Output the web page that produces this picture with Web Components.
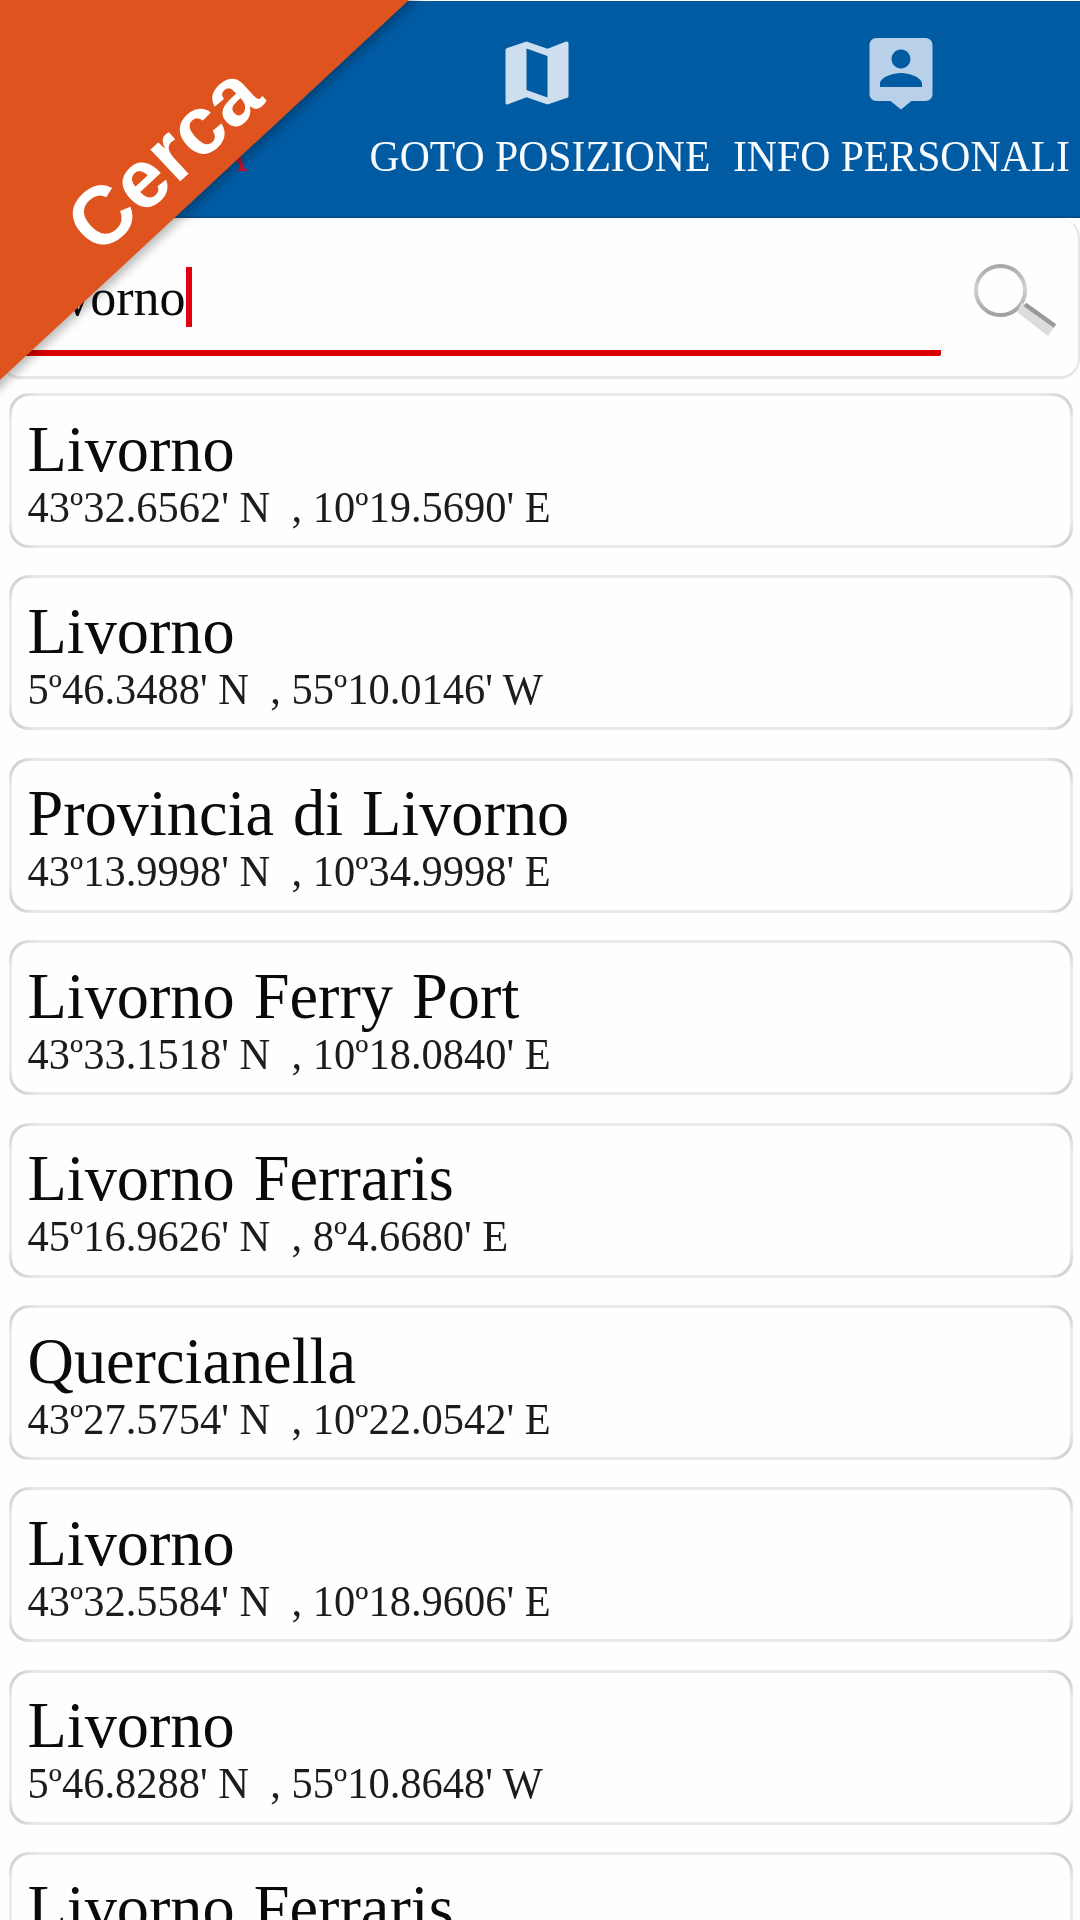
<!DOCTYPE html>
<html lang="it">
<head>
  <meta charset="utf-8">
  <title>Cerca</title>
  <style>
    html, body { margin: 0; height: 100%; overflow: hidden; background: #fefefe; }
    body { font-family: "Liberation Serif", "Times New Roman", serif; color: #0a0a0a; }
  </style>
</head>
<body>
  <search-page>
    <tab-bar slot="header">
      <tab-item active>CERCA</tab-item>
      <tab-item icon="map">GOTO POSIZIONE</tab-item>
      <tab-item icon="person">INFO PERSONALI</tab-item>
    </tab-bar>
    <search-box slot="search">Livorno</search-box>
    <corner-ribbon slot="ribbon">Cerca</corner-ribbon>
  </search-page>

  <script>
    const ICONS = {
      map: '<path fill="#cddfee" d="M20.5 3l-.16.03L15 5.1 9 3 3.36 4.9c-.21.07-.36.25-.36.48V20.5c0 .28.22.5.5.5l.16-.03L9 18.9l6 2.1 5.64-1.9c.21-.07.36-.25.36-.48V3.5c0-.28-.22-.5-.5-.5zM15 19l-6-2.11V5l6 2.11V19z"/>',
      person: '<path fill="#b9d1e8" d="M19 2H5c-1.11 0-2 .9-2 2v14c0 1.1.89 2 2 2h4l3 2.4 3-2.4h4c1.1 0 2-.9 2-2V4c0-1.1-.9-2-2-2zm-7 3.3c1.49 0 2.7 1.21 2.7 2.7 0 1.49-1.21 2.7-2.7 2.7-1.49 0-2.7-1.21-2.7-2.7 0-1.49 1.21-2.7 2.7-2.7zM18 16H6v-.9c0-2 4-3.1 6-3.1s6 1.1 6 3.1v.9z"/>'
    };

    const RESULTS = [
      ['Livorno', "43º32.6562' N  , 10º19.5690' E"],
      ['Livorno', "5º46.3488' N  , 55º10.0146' W"],
      ['Provincia di Livorno', "43º13.9998' N  , 10º34.9998' E"],
      ['Livorno Ferry Port', "43º33.1518' N  , 10º18.0840' E"],
      ['Livorno Ferraris', "45º16.9626' N  , 8º4.6680' E"],
      ['Quercianella', "43º27.5754' N  , 10º22.0542' E"],
      ['Livorno', "43º32.5584' N  , 10º18.9606' E"],
      ['Livorno', "5º46.8288' N  , 55º10.8648' W"],
      ['Livorno Ferraris', '']
    ];

    class TabBar extends HTMLElement {
      constructor() {
        super();
        this.attachShadow({ mode: 'open' }).innerHTML = `
          <style>
            :host {
              display: grid;
              grid-template-columns: repeat(3, 1fr);
              box-sizing: border-box;
              flex: none;
              height: 217px;
              background: #005ba3;
              border-bottom: 2px solid #004c91;
            }
          </style>
          <slot></slot>
        `;
      }
    }

    class TabItem extends HTMLElement {
      constructor() {
        super();
        this.attachShadow({ mode: 'open' });
      }

      connectedCallback() {
        const icon = this.getAttribute('icon');
        this.shadowRoot.innerHTML = `
          <style>
            :host {
              display: flex;
              flex-direction: column;
              align-items: center;
              padding-top: 30px;
              color: #f8fbff;
            }
            :host([active]) { color: #c3122b; }
            svg { width: 84px; height: 84px; flex: none; }
            :host([icon="map"]) svg { margin-right: 6px; }
            :host([icon="person"]) svg { margin-left: 2px; }
            .label {
              margin-top: 19.5px;
              font-size: 41.7px;
              line-height: 42px;
              white-space: nowrap;
              transform: scaleY(1.04);
              transform-origin: top;
            }
            :host([active]) .label { margin-right: 2px; }
            :host([icon="person"]) .label { margin-left: 3px; }
          </style>
          <svg viewBox="0 0 24 24">${ICONS[icon] || ''}</svg>
          <span class="label"><slot></slot></span>
        `;
      }
    }

    class SearchBox extends HTMLElement {
      constructor() {
        super();
        this.attachShadow({ mode: 'open' }).innerHTML = `
          <style>
            :host {
              display: flex;
              box-sizing: border-box;
              flex: none;
              height: 161px;
              padding: 0 15px 0 10px;
              border: 2px solid #e6e6e6;
              border-top-color: #f6f6f6;
              border-bottom-width: 3px;
              border-radius: 20px;
              background: #fefefe;
            }
            .field {
              display: flex;
              align-items: center;
              box-sizing: border-box;
              width: 929px;
              height: 136px;
              padding: 36px 0 12px 6px;
              border-bottom: 6px solid #d80000;
              border-radius: 2px;
            }
            .value { font-size: 52px; line-height: 60px; margin-top: 2px; }
            .caret { width: 6px; height: 60px; background: #e1000f; }
            svg { width: 90px; height: 80px; margin: 40px 0 0 27px; }
          </style>
          <div class="field">
            <span class="value"><slot></slot></span><span class="caret"></span>
          </div>
          <svg viewBox="0 0 90 80">
            <defs>
              <linearGradient id="rim" x1="0" y1="0" x2="0" y2="1">
                <stop offset="0" stop-color="#a8a8a8"/>
                <stop offset=".45" stop-color="#d2d2d2"/>
                <stop offset="1" stop-color="#a0a0a0"/>
              </linearGradient>
            </defs>
            <circle cx="32.5" cy="30.500" r="24.5" fill="none" stroke="url(#rim)" stroke-width="4"/>
            <path d="M54 42L87 66L80 76L49 52Z" fill="#dcdcdc"/>
            <path d="M57 44.5L87 66" stroke="#999" stroke-width="4.5"/>
          </svg>
        `;
      }
    }

    class ResultCard extends HTMLElement {
      constructor() {
        super();
        this.attachShadow({ mode: 'open' });
      }

      set result([name, coords]) {
        this.shadowRoot.innerHTML = `
          <style>
            :host {
              display: block;
              position: relative;
              box-sizing: border-box;
              flex: none;
              height: 155px;
              padding: 18.6px 0 0 15.5px;
              border: 3px solid #e9e9e9;
              border-left-color: #ececec;
              border-right-color: #ececec;
              border-radius: 20px;
              background: #fefefe;
            }
            /* the outline gets darker round the corners */
            :host::after {
              content: "";
              position: absolute;
              inset: -3px;
              border: 3px solid #d4d4d4;
              border-radius: 20px;
              -webkit-mask:
                radial-gradient(circle at 4px 4px, #000 8px, transparent 24px) 0 0 / 50% 50% no-repeat,
                radial-gradient(circle at calc(100% - 4px) 4px, #000 8px, transparent 24px) 100% 0 / 50% 50% no-repeat,
                radial-gradient(circle at 4px calc(100% - 4px), #000 8px, transparent 24px) 0 100% / 50% 50% no-repeat,
                radial-gradient(circle at calc(100% - 4px) calc(100% - 4px), #000 8px, transparent 24px) 100% 100% / 50% 50% no-repeat;
            }
            .text { transform: scaleY(1.02); transform-origin: top; white-space: pre; }
            .name { font-size: 64.3px; line-height: 68px; word-spacing: 3px; }
            .coords { font-size: 42.5px; line-height: 45.5px; color: #1c1c1c; }
          </style>
          <div class="text"><div class="name">${name}</div><div class="coords">${coords}</div></div>
        `;
      }
    }

    class CornerRibbon extends HTMLElement {
      constructor() {
        super();
        this.attachShadow({ mode: 'open' }).innerHTML = `
          <style>
            :host { display: block; position: absolute; top: 0; left: 0; }
            svg { display: block; overflow: visible; filter: drop-shadow(3px 5px 5px rgba(0, 0, 0, .26)); }
            .title {
              position: absolute;
              left: 183px;
              top: 108.7px;
              font: bold 82.3px/83px "Liberation Sans", Arial, sans-serif;
              color: #fff;
              transform: rotate(-42.9deg) translateX(-50%);
              transform-origin: 0 70.3px;
            }
          </style>
          <svg width="420" height="390">
            <path d="M-30 -30H441L409 0L0 380L-30 408Z" fill="#df541e"/>
          </svg>
          <span class="title"><slot></slot></span>
        `;
      }
    }

    class SearchPage extends HTMLElement {
      constructor() {
        super();
        this.attachShadow({ mode: 'open' }).innerHTML = `
          <style>
            :host {
              display: flex;
              flex-direction: column;
              position: relative;
              box-sizing: border-box;
              width: 1080px;
              height: 1920px;
              padding-top: 1px;
              overflow: hidden;
            }
            .results {
              display: flex;
              flex-direction: column;
              gap: 27.4px;
              padding: 14px 7px 0 9px;
            }
          </style>
          <slot name="header"></slot>
          <slot name="search"></slot>
          <div class="results"></div>
          <slot name="ribbon"></slot>
        `;
      }

      connectedCallback() {
        const list = this.shadowRoot.querySelector('.results');
        RESULTS.forEach(result => {
          const card = document.createElement('result-card');
          card.result = result;
          list.appendChild(card);
        });
      }
    }

    customElements.define('tab-item', TabItem);
    customElements.define('tab-bar', TabBar);
    customElements.define('search-box', SearchBox);
    customElements.define('result-card', ResultCard);
    customElements.define('corner-ribbon', CornerRibbon);
    customElements.define('search-page', SearchPage);
  </script>
</body>
</html>
